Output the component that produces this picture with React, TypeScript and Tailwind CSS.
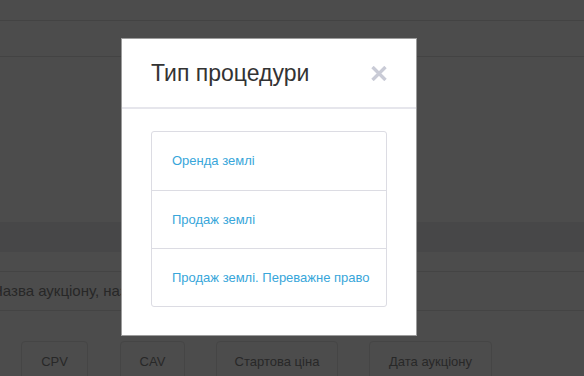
import React from "react";

const items = ["Оренда землі", "Продаж землі", "Продаж землі. Переважне право"];
const buttons = [
  { label: "CPV", ml: "ml-[21px]", w: "w-[67px]" },
  { label: "CAV", ml: "ml-[32px]", w: "w-[65px]" },
  { label: "Стартова ціна", ml: "ml-[31px]", w: "w-[122px]" },
  { label: "Дата аукціону", ml: "ml-[31px]", w: "w-[123px]" },
];

export default function App() {
  return (
    <div
      className="relative w-[584px] h-[376px] overflow-hidden bg-[#4c4c4c]"
      style={{ fontFamily: '"Liberation Sans", Arial, sans-serif' }}
    >
      {/* underlying page */}
      <div className="flex flex-col">
        <div className="h-[21px] border-b border-[#434343]" />
        <div className="h-[36px] border-b border-[#434343]" />
        <div className="h-[165px]" />
        <div className="h-[30px] bg-[#474748]" />
        <div className="h-[20px] border-b border-[#444444]" />
        <div className="h-[39px] border-b border-[#444444] flex items-center ml-[-8px]">
          <span className="text-[15px] text-[#272727] whitespace-nowrap">
            Назва аукціону, назва лоту, номер
          </span>
        </div>
        <div className="h-[30px]" />
        <div className="flex">
          {buttons.map((b) => (
            <div
              key={b.label}
              className={`${b.ml} ${b.w} h-[42px] shrink-0 flex items-center justify-center pb-[1px] border border-[#454545] rounded-[4px] text-[13px] text-[#282828] whitespace-nowrap`}
            >
              {b.label}
            </div>
          ))}
        </div>
      </div>

      {/* modal */}
      <div className="absolute left-[121px] top-[38px] w-[296px] h-[298px] bg-white border border-[#9c9c9c] flex flex-col">
        <div className="h-[70px] shrink-0 px-[29px] flex items-center justify-between border-b-2 border-[#e6e6ec]">
          <span className="text-[23px] text-[#333333] leading-none">Тип процедури</span>
          <svg width="16" height="15" viewBox="0 0 16 15" className="mt-[1px]">
            <path d="M1.5 1 L14.5 14 M14.5 1 L1.5 14" stroke="#c9cbd6" strokeWidth="3.4" />
          </svg>
        </div>
        <div className="pt-[22px] px-[29px]">
          <div className="border border-[#dcdce3] rounded-[3px] flex flex-col">
            {items.map((t, i) => (
              <div
                key={t}
                className={`h-[58px] flex items-center pl-[20px] text-[13px] text-[#38a6da] ${i > 0 ? "border-t border-[#dcdce3]" : ""}`}
              >
                {t}
              </div>
            ))}
          </div>
        </div>
      </div>
    </div>
  );
}
